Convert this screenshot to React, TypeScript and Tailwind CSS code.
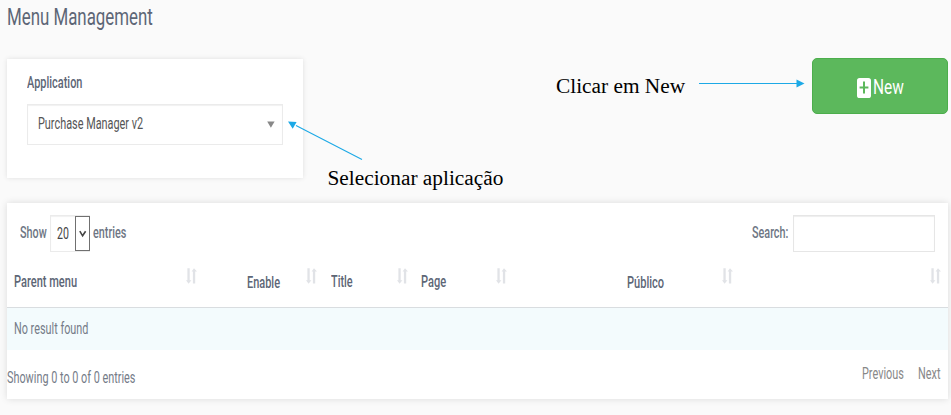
import clsx from "clsx";

type LabelProps = { text: string; box: string; type: string };

// Condensed label: the box keeps its laid-out width, the glyphs are narrowed inside it.
function Label({ text, box, type }: LabelProps) {
  return (
    <span className={clsx("block shrink-0 whitespace-nowrap", box)}>
      <span className={clsx("block w-max origin-left", type)}>{text}</span>
    </span>
  );
}

function SortIcon({ place }: { place: string }) {
  return (
    <svg className={clsx("mt-[10px] h-4 w-[11px] shrink-0", place)} viewBox="0 0 11 16" fill="#e1e3e7">
      <path d="M1.4 0.3h2.3v12h1.7L2.6 15.8 0 12.3h1.4z" />
      <path d="M6.9 15.6h2.3v-12H11L8 0.2 5.6 3.6h1.3z" />
    </svg>
  );
}

const columns: { text: string; pad: string; box: string; type: string; icon: string }[] = [
  { text: "Parent menu", pad: "pl-[7px] pt-[14px]", box: "w-[63px]", type: "scale-x-[0.69]", icon: "mr-[5px]" },
  { text: "Enable", pad: "pl-[45px] pt-[15px]", box: "w-[33px]", type: "scale-x-[0.685]", icon: "mr-[6px]" },
  { text: "Title", pad: "pl-[7.5px] pt-[14px]", box: "w-[22px]", type: "scale-x-[0.68]", icon: "mr-[5px]" },
  { text: "Page", pad: "pl-2 pt-[14px]", box: "w-[26px]", type: "scale-x-[0.69]", icon: "mr-[6px]" },
  { text: "Público", pad: "pl-[114px] pt-[15px]", box: "w-[37px]", type: "scale-x-[0.69]", icon: "mr-[5px]" },
  { text: "", pad: "", box: "", type: "", icon: "mr-[7px]" },
];

export default function App() {
  return (
    <div className="relative h-[415px] w-[951px] overflow-hidden bg-[#fafafa] font-['Roboto',sans-serif] text-[#5d6676]">
      <header className="h-[58px] pl-[6.5px] pt-1">
        <h1>
          <Label text="Menu Management" box="w-[146px]" type="text-[23px] leading-7 scale-x-[0.733]" />
        </h1>
      </header>

      <div className="flex h-[145px] justify-between pl-[7px] pr-[3px]">
        <section className="mt-px h-[119px] w-[296.4px] bg-white pl-[20.4px] pt-[14px] shadow-[0_0_5px_rgba(0,0,0,0.11)]">
          <Label text="Application" box="w-[56px]" type="text-base font-medium leading-5 scale-x-[0.685]" />
          <div className="mt-[11px] flex h-[41px] w-[255.6px] items-start justify-between border border-[#ebebeb] bg-white pl-[10px] pr-[7px] pt-[9px] shadow-[inset_0_1px_1px_rgba(0,0,0,0.06)]">
            <Label text="Purchase Manager v2" box="w-[105px]" type="text-base leading-5 text-[#555] scale-x-[0.68]" />
            <svg className="mt-[7px] h-[7px] w-[8px]" viewBox="0 0 8 7" fill="#888">
              <path d="M0.2 0.5h7.4L3.9 6.8z" />
            </svg>
          </div>
        </section>

        <button className="flex h-[56px] w-[136px] items-start rounded-[5px] border border-[#4cae4c] bg-[#5cb85c] pl-[44px] text-white">
          <svg className="mt-[19px] h-5 w-[14px]" viewBox="0 0 14 20">
            <rect width="14" height="20" rx="2.6" fill="#fff" />
            <path d="M7 3.6v12M2.6 9.6h8.8" stroke="#5cb85c" strokeWidth="2" />
          </svg>
          <span className="ml-[2px] mt-[14px] text-left">
            <Label text="New" box="w-[31px]" type="text-[21px] leading-7 scale-x-[0.735]" />
          </span>
        </button>
      </div>

      <section className="ml-[7px] h-[196px] w-[941px] bg-white shadow-[0_0_7px_rgba(0,0,0,0.13)]">
        <div className="flex h-[55px] justify-between pl-[13px] pr-[13px] pt-[12px]">
          <div className="flex h-[37px]">
            <span className="pt-[8px]">
              <Label text="Show" box="w-[30px]" type="text-base leading-5 font-medium text-[#6e7684] scale-x-[0.675]" />
            </span>
            <div className="flex w-[40px] border border-[#ebebeb] pl-[6px] shadow-[inset_0_1px_1px_rgba(0,0,0,0.06)]">
              <span className="pt-[8px]">
                <Label text="20" box="w-[18px]" type="text-base leading-5 text-[#444] scale-x-[0.66]" />
              </span>
              <div className="h-[35px] w-[15px] shrink-0 border border-[#707070] bg-white">
                <svg className="ml-[3px] mt-[13px] h-[8px] w-[8px]" viewBox="0 0 8 8" fill="none" stroke="#444" strokeWidth="1.6">
                  <path d="M0.8 1.2L3.6 5.8 6.6 1.2" />
                </svg>
              </div>
            </div>
            <span className="pl-[3px] pt-[8px]">
              <Label text="entries" box="w-[34px]" type="text-base leading-5 font-medium text-[#6e7684] scale-x-[0.675]" />
            </span>
          </div>
          <div className="flex h-[37px]">
            <span className="pt-[8px]">
              <Label text="Search:" box="w-[41px]" type="text-base leading-5 font-medium text-[#6e7684] scale-x-[0.675]" />
            </span>
            <div className="w-[142px] border border-[#e6e6e6] shadow-[inset_0_1px_1px_rgba(0,0,0,0.07)]" />
          </div>
        </div>

        <div className="grid h-[50px] grid-cols-[195px_121px_90px_100px_225px_210px] border-b border-[#d9dde0]">
          {columns.map((c, i) => (
            <div key={i} className="flex justify-between">
              <div className={c.pad}>
                <Label text={c.text} box={c.box} type={clsx("text-base font-medium leading-5", c.type)} />
              </div>
              <SortIcon place={c.icon} />
            </div>
          ))}
        </div>

        <div className="h-[42px] bg-[#f3fbfd] pl-[7px] pt-[11px]">
          <Label text="No result found" box="w-[75px]" type="text-base leading-5 text-[#757c88] scale-x-[0.678]" />
        </div>

        <div className="flex justify-between pr-[8px]">
          <span className="pt-[18px]">
            <Label text="Showing 0 to 0 of 0 entries" box="w-[129px]" type="text-base leading-5 text-[#757c88] scale-x-[0.678]" />
          </span>
          <div className="flex gap-[14px] pt-[14px] text-[#888]">
            <Label text="Previous" box="w-[42px]" type="text-base leading-5 scale-x-[0.68]" />
            <Label text="Next" box="w-[22px]" type="text-base leading-5 scale-x-[0.68]" />
          </div>
        </div>
      </section>

      {/* Instruction notes laid over the screen */}
      <svg className="pointer-events-none absolute left-0 top-0 h-[415px] w-[951px]" viewBox="0 0 951 415" fill="#1ca9e6" stroke="none">
        <path d="M296 125.5L362 159.5M699 83.5H798" stroke="#1ca9e6" strokeWidth="1.1" />
        <path d="M288 121.6L296.6 121.9 292.7 128.8zM796.5 79.6L804.5 83.5 796.5 87.4z" />
      </svg>
      <p className="absolute left-[556px] top-[74px] whitespace-nowrap font-['Liberation_Serif',serif] text-[21.33px] leading-6 text-black">Clicar em New</p>
      <p className="absolute left-[327.5px] top-[166px] whitespace-nowrap font-['Liberation_Serif',serif] text-[21.33px] leading-6 text-black">Selecionar aplicação</p>
    </div>
  );
}
